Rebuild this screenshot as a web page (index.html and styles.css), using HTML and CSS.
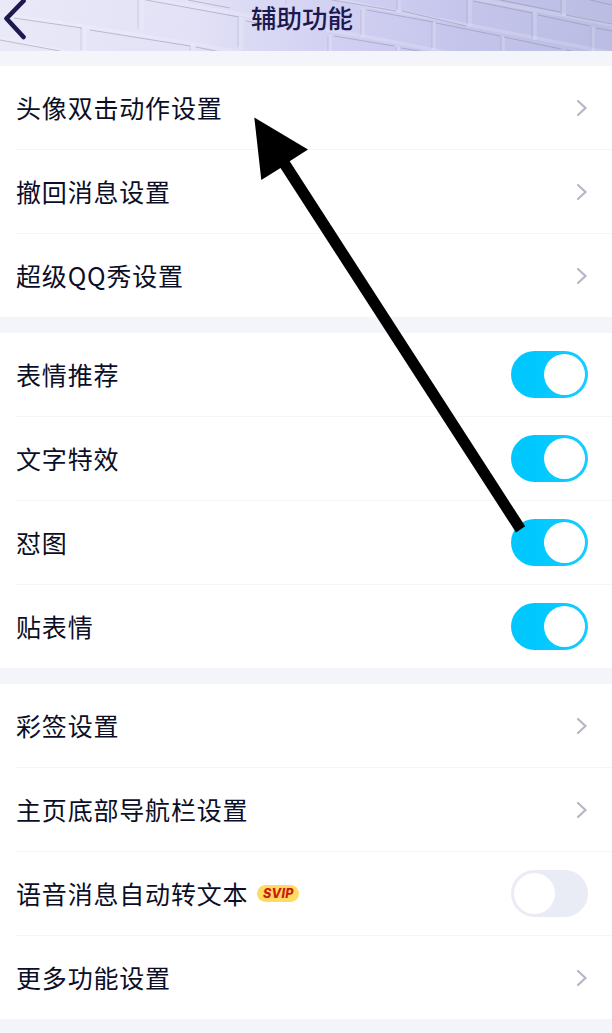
FILE: index.html
```html
<!DOCTYPE html>
<html lang="zh-CN">
<head>
<meta charset="utf-8">
<title>辅助功能</title>
<link rel="stylesheet" href="styles.css">
</head>
<body>
<div class="screen">
  <header class="header">
    <svg class="bricks" viewBox="0 0 612 51" preserveAspectRatio="none" aria-hidden="true">
      <g class="brick-light">
        <path d="M0 14 L76 25 L190 43 L245 53"/>
        <path d="M136 -3 L240 14 L384 40 L450 53"/>
        <path d="M324 -3 L368 6 L500 31 L612 53"/>
        <path d="M465 -3 L530 9 L612 25"/>
        <path d="M0 38 L72 53"/>
        <path d="M142 0V29M241 17V50M85 28V53M193 44V53M363 8V37M434 22V50M330 35V53M398 46V53M470 0V26M535 12V40M503 36V53M564 0V16M593 27V53M399 0V12"/>
      </g>
      <g class="brick-dark">
        <path d="M14 18 L82 28M0 40 L60 51M90 30 L190 46M146 0 L239 17M196 47 L220 52M188 0 L230 8M246 21 L280 27M334 36 L394 46M367 10 L433 22M401 48 L425 52M332 0 L396 11M436 23 L500 36M402 11 L466 26M504 37 L561 49M473 1 L532 13M538 15 L590 26M566 50 L580 53M596 28 L612 31M500 0 L560 12M566 15 L612 24M590 0 L612 5"/>
        <path class="brick-joint" d="M138 0V29M238 18V47M81 28V50M190 46V52M361 10V35M432 22V48M328 36V51M396 47V51M467 0V24M532 13V38M501 36V51M561 0V14M591 27V49M397 0V10M286 0V4"/>
      </g>
    </svg>
    <svg class="back" viewBox="0 0 30 51" aria-label="返回"><path d="M23.5 1 L6.5 18.5 L23.5 37"/></svg>
    <h1 class="title">辅助功能</h1>
  </header>

  <main class="groups">
    <section class="group">
      <div class="row"><span class="label">头像双击动作设置</span><svg class="chevron" viewBox="0 0 12 18"><path d="M2 2 L9.5 9 L2 16"/></svg></div>
      <div class="row"><span class="label">撤回消息设置</span><svg class="chevron" viewBox="0 0 12 18"><path d="M2 2 L9.5 9 L2 16"/></svg></div>
      <div class="row"><span class="label">超级QQ秀设置</span><svg class="chevron" viewBox="0 0 12 18"><path d="M2 2 L9.5 9 L2 16"/></svg></div>
    </section>
    <section class="group">
      <div class="row"><span class="label">表情推荐</span><i class="switch on"></i></div>
      <div class="row"><span class="label">文字特效</span><i class="switch on"></i></div>
      <div class="row"><span class="label">怼图</span><i class="switch on"></i></div>
      <div class="row"><span class="label">贴表情</span><i class="switch on"></i></div>
    </section>
    <section class="group">
      <div class="row"><span class="label">彩签设置</span><svg class="chevron" viewBox="0 0 12 18"><path d="M2 2 L9.5 9 L2 16"/></svg></div>
      <div class="row"><span class="label">主页底部导航栏设置</span><svg class="chevron" viewBox="0 0 12 18"><path d="M2 2 L9.5 9 L2 16"/></svg></div>
      <div class="row"><span class="label">语音消息自动转文本</span><b class="svip">SVIP</b><i class="switch"></i></div>
      <div class="row"><span class="label">更多功能设置</span><svg class="chevron" viewBox="0 0 12 18"><path d="M2 2 L9.5 9 L2 16"/></svg></div>
    </section>
  </main>

  <svg class="pointer" viewBox="0 0 612 1033" aria-hidden="true">
    <path d="M254.3 117.5 L308 149.5 L289.7 161.3 L525.2 526.3 L516 532.5 L280.5 168 L261.3 180 Z"/>
  </svg>
</div>
</body>
</html>
```
FILE: styles.css
```css
* { box-sizing: border-box; }

body {
  margin: 0;
  background: #f4f5fa;
  color: #0b0e27;
  font-family: "Noto Sans CJK SC", sans-serif;
}

.screen {
  position: relative;
  width: 612px;
  height: 1033px;
  overflow: hidden;
}

.header {
  position: relative;
  display: flex;
  justify-content: center;
  height: 51px;
  overflow: hidden;
  background: linear-gradient(98deg, #e9e9f8 0%, #e2e1f6 32%, #d3d2f3 52%, #c5c5ec 75%, #babce2 100%);
}

.bricks { position: absolute; inset: 0; width: 100%; height: 100%; }
.bricks path { fill: none; }
.brick-light { stroke: #fff; stroke-opacity: .16; stroke-width: 3.5; }
.brick-dark { stroke: #85849f; stroke-opacity: .5; stroke-width: .9; }
.brick-joint { stroke-opacity: .28; }

.back { position: absolute; left: 0; top: 0; width: 30px; height: 51px; }
.back path { fill: none; stroke: #1c1850; stroke-width: 4.6; stroke-linecap: round; stroke-linejoin: round; }

.title {
  position: relative;
  margin: 0 8px 0 0;
  color: #1c1850;
  font-size: 25.5px;
  font-weight: 500;
  line-height: 34px;
}

.groups { display: flex; flex-direction: column; gap: 16px; padding-top: 15px; }
.group { background: #fff; }

.row {
  display: flex;
  align-items: center;
  height: 84px;
  padding-right: 24px;
  margin-left: 16px;
  border-bottom: 1px solid #f5f5f8;
  font-size: 25px;
  letter-spacing: .82px;
  line-height: 36px;
}
.row:last-child { height: 83px; border-bottom: 0; }
.label { padding-bottom: 2px; }

.chevron { width: 12px; height: 18px; margin-left: auto; }
.chevron path { fill: none; stroke: #b6b6c6; stroke-width: 2.2; stroke-linecap: round; stroke-linejoin: miter; }

.switch {
  display: flex;
  width: 77px;
  height: 47px;
  margin-left: auto;
  padding: 3px;
  border-radius: 24px;
  background: #e9ebf5;
}
.switch::before { content: ""; width: 41px; height: 41px; border-radius: 50%; background: #fff; }
.switch.on { justify-content: flex-end; background: linear-gradient(90deg, #00c8ff 30%, #18ccff); }

.svip {
  width: 42px;
  height: 17px;
  margin-left: 9px;
  border-radius: 9px;
  background: #ffdc60;
  color: #cf1810;
  font: italic 800 12.5px/17px Inter, sans-serif;
  letter-spacing: .3px;
  text-align: center;
}

.pointer { position: absolute; inset: 0; width: 612px; height: 1033px; pointer-events: none; }
```
